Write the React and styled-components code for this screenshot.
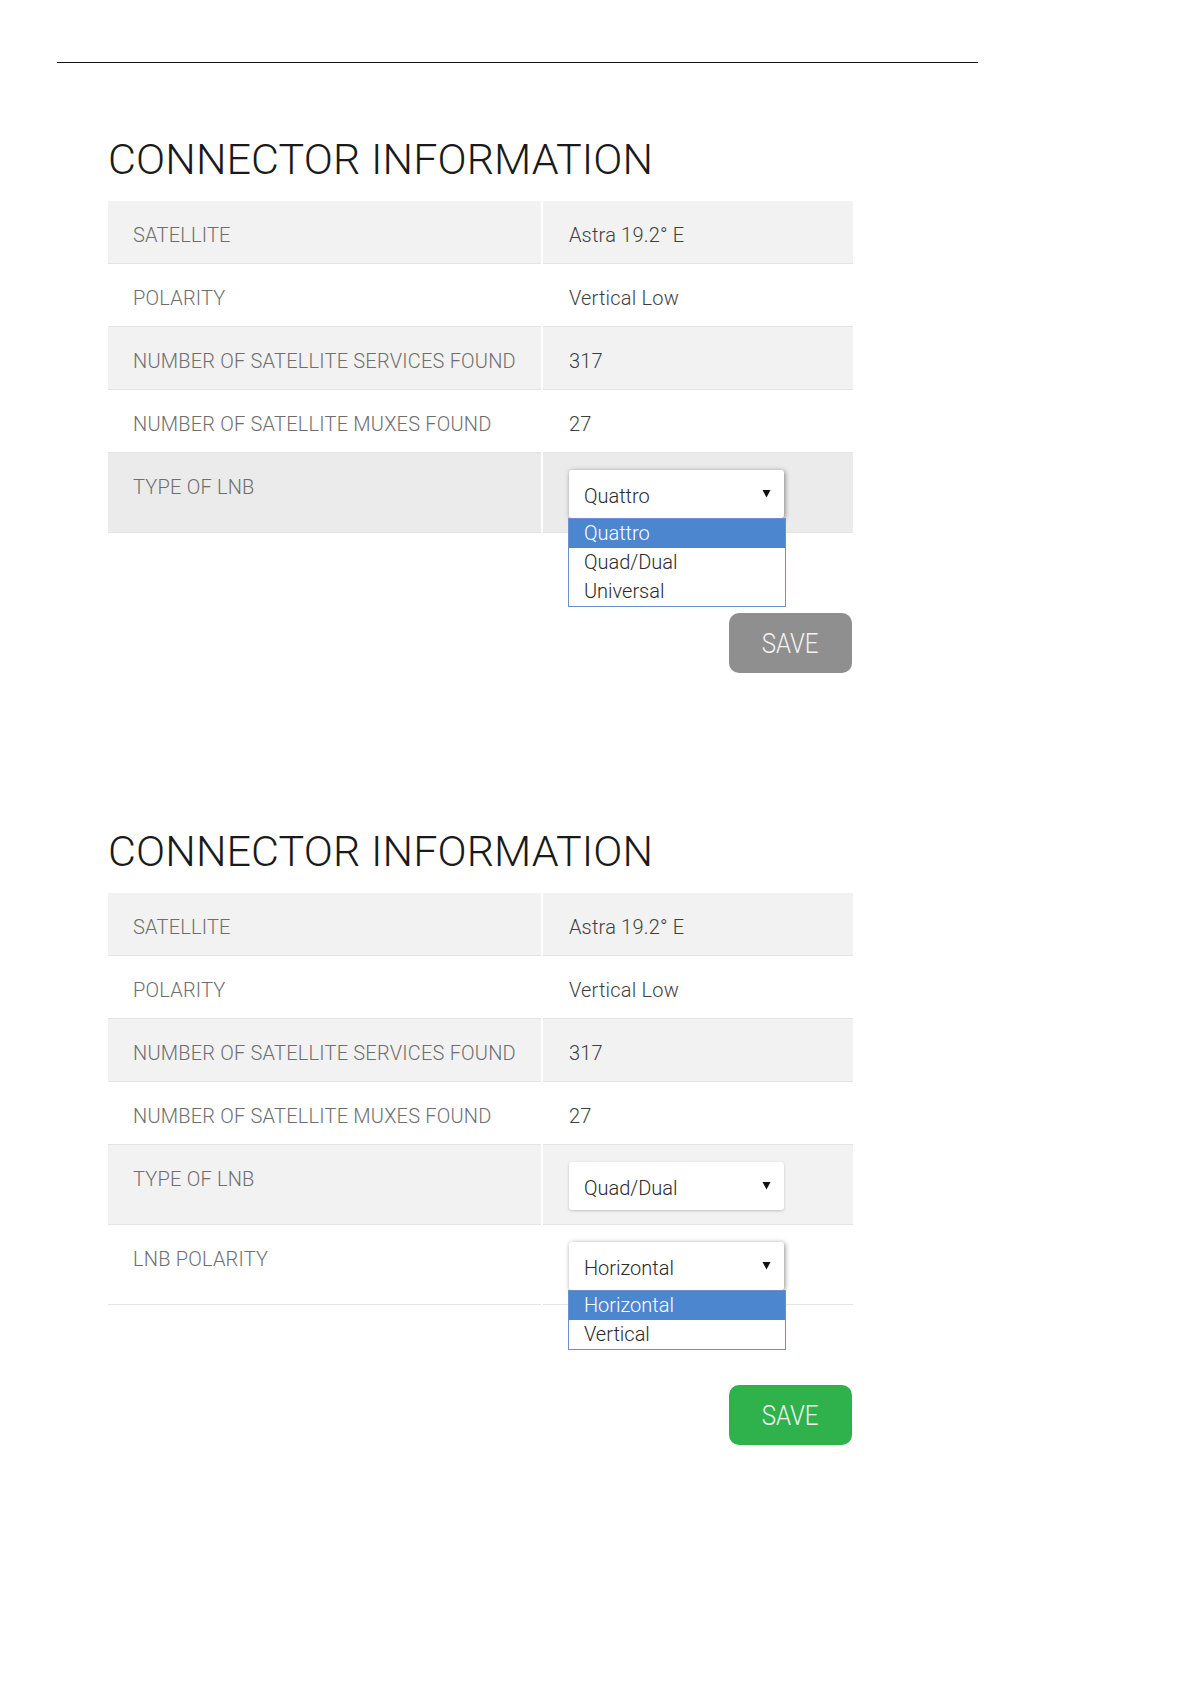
import React from 'react';
import styled, { createGlobalStyle } from 'styled-components';

const GlobalStyle = createGlobalStyle`
  body {
    margin: 0;
    background: #fff;
    font-family: Roboto, 'Liberation Sans', sans-serif;
  }
`;

const baseRows = [
  { label: 'SATELLITE', value: 'Astra 19.2° E' },
  { label: 'POLARITY', value: 'Vertical Low' },
  { label: 'NUMBER OF SATELLITE SERVICES FOUND', value: '317' },
  { label: 'NUMBER OF SATELLITE MUXES FOUND', value: '27' },
];

const Arrow = () => (
  <svg width="9" height="9" viewBox="0 0 9 9">
    <polygon points="0.5,1 8.5,1 4.5,8.5" fill="#111" />
  </svg>
);

const SelectBox = ({ value, options, open }) => (
  <SelectWrap>
    <SelectField open={open}>
      <span>{value}</span>
      <Arrow />
    </SelectField>
    {open && (
      <OptionList>
        {options.map((opt) => (
          <Option key={opt} selected={opt === value}>
            {opt}
          </Option>
        ))}
      </OptionList>
    )}
  </SelectWrap>
);

const ConnectorSection = ({ selects, saveColor }) => (
  <Section>
    <Title>CONNECTOR INFORMATION</Title>
    <InfoTable>
      <tbody>
        {baseRows.map((row, i) => (
          <Row key={row.label} striped={i % 2 === 0}>
            <LabelCell>{row.label}</LabelCell>
            <ValueCell>{row.value}</ValueCell>
          </Row>
        ))}
        {selects.map((sel, i) => (
          <Row key={sel.label} striped={i % 2 === 0} hover={sel.hover}>
            <LabelCell>{sel.label}</LabelCell>
            <ValueCell hasSelect>
              <SelectBox value={sel.value} options={sel.options} open={sel.open} />
            </ValueCell>
          </Row>
        ))}
      </tbody>
    </InfoTable>
    <SaveRow>
      <SaveButton color={saveColor}>
        <SaveText>SAVE</SaveText>
      </SaveButton>
    </SaveRow>
  </Section>
);

export default function App() {
  return (
    <Page>
      <GlobalStyle />
      <TopRule />
      <ConnectorSection
        saveColor="#8f8f8f"
        selects={[
          {
            label: 'TYPE OF LNB',
            value: 'Quattro',
            options: ['Quattro', 'Quad/Dual', 'Universal'],
            open: true,
            hover: true,
          },
        ]}
      />
      <ConnectorSection
        saveColor="#2fb24c"
        selects={[
          {
            label: 'TYPE OF LNB',
            value: 'Quad/Dual',
            options: ['Quattro', 'Quad/Dual', 'Universal'],
          },
          {
            label: 'LNB POLARITY',
            value: 'Horizontal',
            options: ['Horizontal', 'Vertical'],
            open: true,
          },
        ]}
      />
    </Page>
  );
}

// Styled components
const Page = styled.div`
  width: 1191px;
  min-height: 1684px;
  padding-top: 62px;
  box-sizing: border-box;
`;

const TopRule = styled.div`
  margin-left: 57px;
  width: 921px;
  height: 1px;
  background: #111;
`;

const Section = styled.section`
  margin-left: 108px;
  width: 745px;
  margin-top: 71px;

  & + & {
    margin-top: 153px;
  }
`;

const Title = styled.h1`
  margin: 0 0 17px;
  font-family: Roboto, 'Liberation Sans', sans-serif;
  font-weight: 300;
  font-size: 43px;
  line-height: 50px;
  color: #1a1a1a;
  letter-spacing: 0.1px;
`;

const InfoTable = styled.table`
  width: 745px;
  border-collapse: collapse;
  font-size: 20px;
  font-weight: 300;
  line-height: 24px;
  letter-spacing: 0.2px;
`;

const Row = styled.tr`
  background: ${(p) => (p.hover ? '#ebebeb' : p.striped ? '#f2f2f2' : '#fff')};
  border-bottom: 1px solid #e4e4e4;
`;

const LabelCell = styled.td`
  width: 433px;
  box-sizing: border-box;
  padding: 22px 25px 16px;
  vertical-align: top;
  color: #6e6e6e;
  white-space: nowrap;
`;

const ValueCell = styled.td`
  border-left: 2px solid #fff;
  padding: ${(p) => (p.hasSelect ? '17px 26px 14px 26px' : '22px 26px 16px')};
  vertical-align: top;
  color: #3e3e3e;
`;

const SelectWrap = styled.div`
  position: relative;
  width: 215px;
  letter-spacing: 0;
`;

const SelectField = styled.div`
  display: flex;
  align-items: center;
  justify-content: space-between;
  height: 48px;
  box-sizing: border-box;
  padding: 4px 13px 0 15px;
  background: #fff;
  border-radius: 3px;
  color: #2a2a2a;
  font-size: 20px;
  box-shadow: ${(p) =>
    p.open ? '1px 1px 5px rgba(0, 0, 0, 0.45)' : '0 1px 3px rgba(0, 0, 0, 0.2)'};

  svg {
    margin-top: -6px;
  }
`;

const OptionList = styled.div`
  position: absolute;
  top: 48px;
  left: -1px;
  width: 216px;
  background: #fff;
  border: 1px solid #6d8fcf;
  z-index: 2;
`;

const Option = styled.div`
  height: 29px;
  line-height: 29px;
  padding-left: 15px;
  font-size: 20px;
  background: ${(p) => (p.selected ? '#4c86cf' : '#fff')};
  color: ${(p) => (p.selected ? '#fff' : '#2a2a2a')};
`;

const SaveRow = styled.div`
  display: flex;
  justify-content: flex-end;
  margin-top: 80px;
  padding-right: 1px;
`;

const SaveButton = styled.button`
  width: 123px;
  height: 60px;
  border: none;
  border-radius: 10px;
  background: ${(p) => p.color};
  color: #f2f2f2;
  font-family: Roboto, 'Liberation Sans', sans-serif;
  font-weight: 300;
  font-size: 28px;
  cursor: pointer;
  padding: 0;
`;

const SaveText = styled.span`
  display: inline-block;
  transform: scaleX(0.86);
`;
